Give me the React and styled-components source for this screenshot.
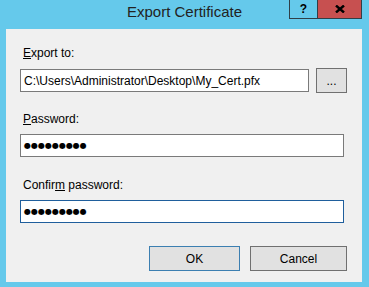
import React from 'react'
import styled, { createGlobalStyle } from "styled-components"

const GlobalStyle = createGlobalStyle`
    html, body {
        margin: 0;
        padding: 0;
    }
    body {
        width: 369px;
        height: 287px;
        overflow: hidden;
        background: #65c9eb;
        font-family: "Liberation Sans", Arial, sans-serif;
    }
`;

const ExportCertificate = () => {
    return (
        <Window>
            <TitleBar>
                <span></span>
                <Title>Export Certificate</Title>
                <CaptionButtons>
                    <HelpButton>?</HelpButton>
                    <CloseButton>
                        <svg width="10" height="8" viewBox="0 0 10 8">
                            <path d="M1 0.5 L9 7.5 M9 0.5 L1 7.5" stroke="#000" strokeWidth="2.4" />
                        </svg>
                    </CloseButton>
                </CaptionButtons>
            </TitleBar>
            <Client>
                <Field>
                    <Label><AccessKey>E</AccessKey>xport to:</Label>
                    <Row>
                        <TextBox width={289}>C:\Users\Administrator\Desktop\My_Cert.pfx</TextBox>
                        <BrowseButton>...</BrowseButton>
                    </Row>
                </Field>
                <Field spacing={18}>
                    <Label><AccessKey>P</AccessKey>assword:</Label>
                    <TextBox width={324}><Dots>●●●●●●●●●</Dots></TextBox>
                </Field>
                <Field spacing={20}>
                    <Label>Confir<AccessKey>m</AccessKey> password:</Label>
                    <TextBox width={324} focused><Dots>●●●●●●●●●</Dots></TextBox>
                </Field>
                <Footer>
                    <DialogButton width={91} isDefault>OK</DialogButton>
                    <DialogButton width={97}>Cancel</DialogButton>
                </Footer>
            </Client>
        </Window>
    );
};

const App = () => {
    return (
        <>
            <GlobalStyle />
            <ExportCertificate />
        </>
    );
};

// Styled Components
const Window = styled.div`
    display: flex;
    flex-direction: column;
    height: 287px;
`;

const TitleBar = styled.div`
    display: grid;
    grid-template-columns: 1fr auto 1fr;
    height: 29px;
    flex-shrink: 0;
`;

const Title = styled.div`
    font-size: 15px;
    line-height: 20px;
    padding-top: 2px;
    color: #222;
`;

const CaptionButtons = styled.div`
    display: flex;
    justify-content: flex-end;
    align-items: flex-start;
    padding-right: 7px;
`;

const HelpButton = styled.div`
    width: 28px;
    height: 19px;
    box-sizing: border-box;
    border: 1px solid #2f3f48;
    border-top: none;
    border-right: none;
    display: flex;
    align-items: center;
    justify-content: center;
    font-weight: bold;
    font-size: 12px;
    color: #000;
`;

const CloseButton = styled.div`
    width: 45px;
    height: 19px;
    box-sizing: border-box;
    border: 1px solid #2f3f48;
    border-top: none;
    background: #c75050;
    display: flex;
    align-items: center;
    justify-content: center;
`;

const Client = styled.div`
    flex: 1;
    margin: 0 7px 5px 6px;
    background: #f0f0f0;
    padding: 16px 0 0 14px;
    display: flex;
    flex-direction: column;
`;

const Field = styled.div`
    display: flex;
    flex-direction: column;
    gap: 7px;
    margin-top: ${(p) => p.spacing || 0}px;
`;

const Label = styled.div`
    font-size: 12px;
    line-height: 16px;
    color: #000;
    padding-left: 3px;
`;

const AccessKey = styled.span`
    text-decoration: underline;
`;

const Row = styled.div`
    display: flex;
    align-items: center;
    gap: 7px;
`;

const TextBox = styled.div`
    width: ${(p) => p.width}px;
    height: 23px;
    box-sizing: border-box;
    border: 1px solid ${(p) => (p.focused ? "#1f5e9c" : "#7a7a7a")};
    background: #fff;
    padding-left: 3px;
    display: flex;
    align-items: center;
    font-size: 12px;
    color: #000;
    white-space: nowrap;
    overflow: hidden;
`;

const Dots = styled.span`
    font-family: "DejaVu Sans", sans-serif;
    font-size: 8px;
    letter-spacing: 0;
`;

const BrowseButton = styled.div`
    width: 31px;
    height: 25px;
    box-sizing: border-box;
    border: 1px solid #707070;
    background: #e1e1e1;
    display: flex;
    align-items: center;
    justify-content: center;
    font-size: 12px;
    color: #000;
`;

const Footer = styled.div`
    display: flex;
    justify-content: flex-end;
    gap: 10px;
    margin-top: 23px;
    padding-right: 15px;
`;

const DialogButton = styled.div`
    width: ${(p) => p.width}px;
    height: 25px;
    box-sizing: border-box;
    border: 1px solid ${(p) => (p.isDefault ? "#3c7fb1" : "#707070")};
    background: #e1e1e1;
    display: flex;
    align-items: center;
    justify-content: center;
    font-size: 12px;
    color: #000;
`;

export default App
